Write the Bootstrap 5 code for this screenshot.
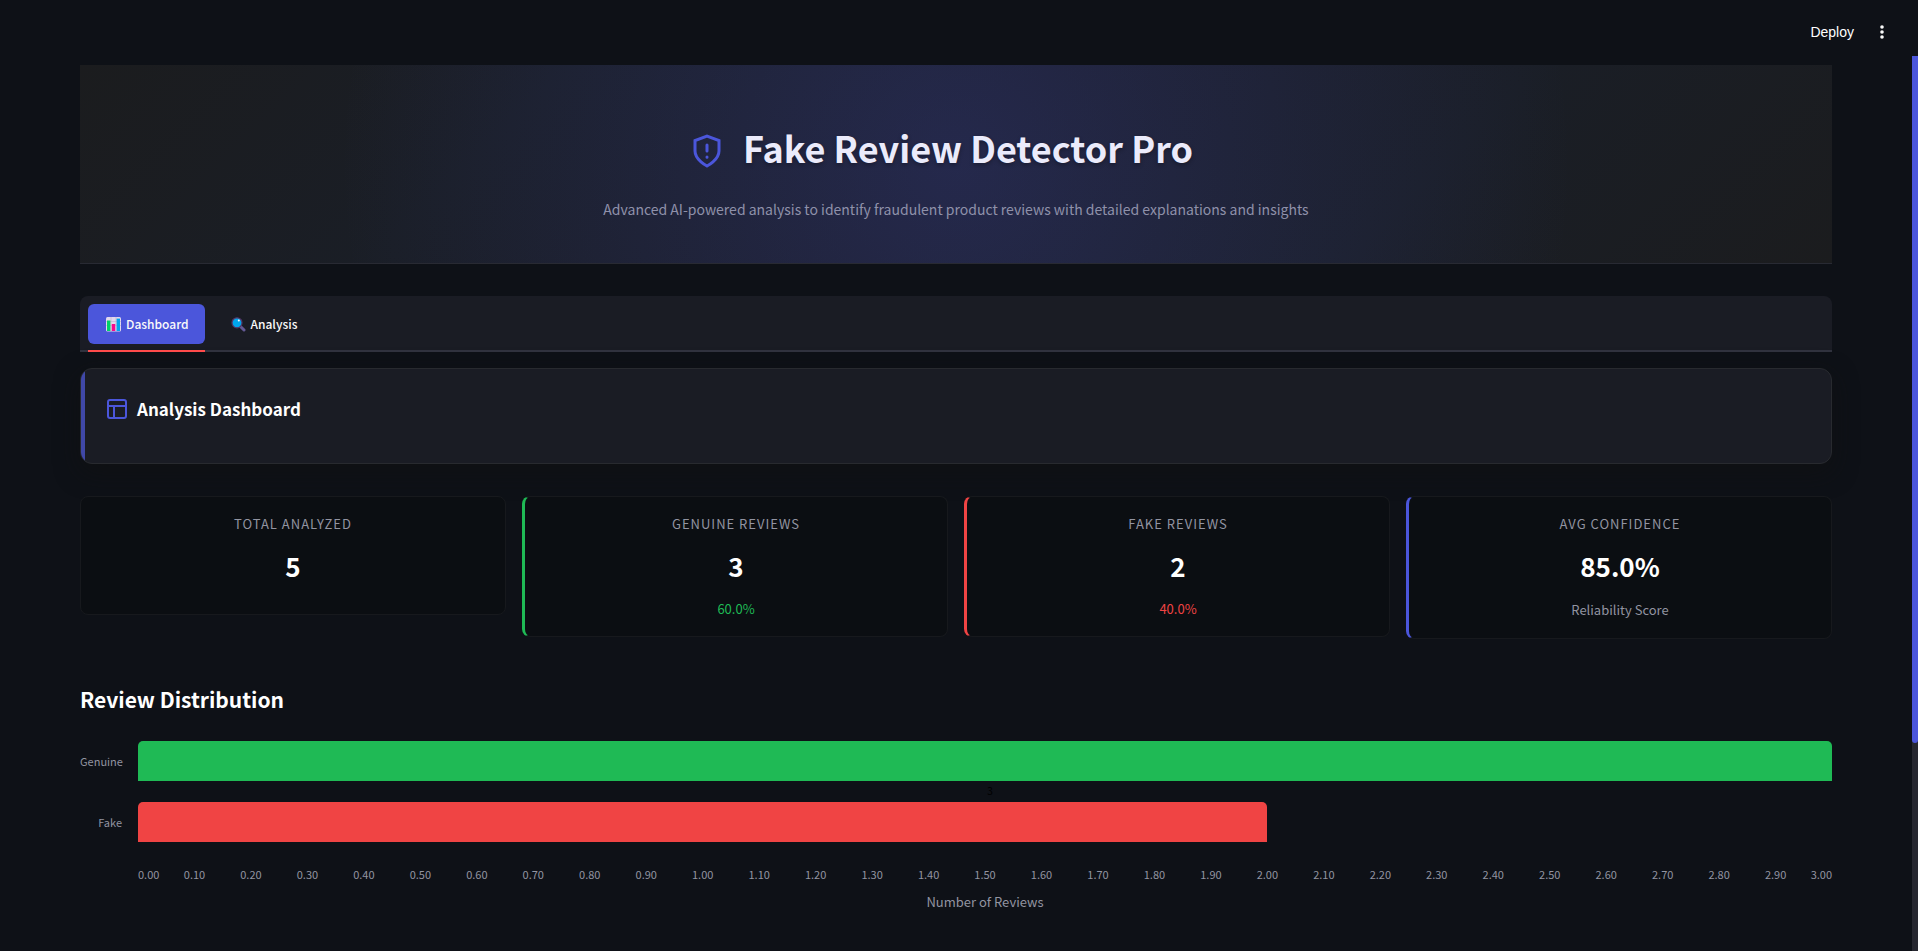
<!DOCTYPE html>
<html lang="en" data-bs-theme="dark">
<head>
<meta charset="utf-8">
<meta name="viewport" content="width=device-width, initial-scale=1">
<title>Fake Review Detector Pro</title>
<link rel="stylesheet" href="https://cdn.jsdelivr.net/npm/bootstrap@5.3.0/dist/css/bootstrap.min.css">
<style>
  :root { --page: #0e1117; --panel: #1a1c24; --accent: #4b56db; --good: #1fba55; --bad: #f04444; --muted: #9294a1; }
  body { background: var(--page); color: #fafafa; font-family: "Noto Sans CJK SC", "Noto Sans", sans-serif; font-size: 14px; line-height: 20px; }
  .topbar { height: 56px; padding: 0 24px; }
  .topbar button { font-family: "Liberation Sans", Arial, sans-serif; font-size: 14px; color: #fff; background: none; border: 0; }
  .topbar .deploy { padding: 0 20px 0 0; }
  .content-area { padding: 9px 80px 24px; min-width: 0; }
  .scroll-track { width: 6px; background: #262730; }
  .scroll-thumb { background: var(--accent); border-radius: 0 0 3px 3px; }
  .hero { height: 199px; padding-top: 58px; margin-bottom: 32px; border-bottom: 1px solid #282a33;
    background: radial-gradient(circle at center, rgba(75,86,219,.22), rgba(75,86,219,0) 70%), linear-gradient(135deg, #1b1c1e 0%, #1a1e26 25%, #1a1c24 50%, #1a1e26 75%, #1b1c1e 100%); }
  .hero h1 { font-size: 36px; line-height: 48px; font-weight: 700; color: #ebebfb; text-shadow: 0 2px 4px rgba(0,0,0,.3); padding-right: 30px; margin-bottom: 26px; }
  .hero h1 svg { margin: 8px 18px 0 0; }
  .hero p { font-size: 14px; line-height: 24px; color: #8f91aa; }
  .tab-strip { background: var(--panel); border-bottom: 2px solid #31333f; border-radius: 8px 8px 0 0; padding: 8px 8px 0; height: 56px; gap: 8px; }
  .tab-strip button { display: flex; align-items: flex-start; height: 48px; padding: 0; border: 0; background: none; color: #fafafa; font-size: 12px; font-weight: 500; border-bottom: 2px solid transparent; }
  .tab-strip button span { height: 40px; padding: 0 16px 0 18px; border-radius: 6px; gap: 5px; }
  .tab-strip button.active { border-color: #ff4b4b; }
  .tab-strip button.active span { background: var(--accent); }
  .panel-head { height: 96px; margin-bottom: 32px; background: var(--panel); border: 1px solid #282a2f; border-radius: 12px; overflow: hidden; box-shadow: 0 8px 24px rgba(16,16,16,.6); }
  .panel-head::before { content: ""; width: 4px; background: #4048a8; margin-right: 22px; }
  .panel-head h2 { font-size: 17px; line-height: 24px; font-weight: 700; }
  .panel-title { gap: 10px; }
  .metric { background: #0b0e12; border: 1px solid #17191d; border-radius: 8px; text-align: center; padding: 17px 16px 16px; }
  .metric.edge { border-left: 3px solid var(--edge); }
  .metric h3 { font-size: 13px; line-height: 20px; font-weight: 400; letter-spacing: 1px; color: var(--muted); margin-bottom: 14px; }
  .metric strong { display: block; font-size: 26px; line-height: 36px; font-weight: 700; color: #fff; margin-bottom: 14px; }
  .metric small { display: block; font-size: 13px; line-height: 22px; }
  .metric small.caption { color: var(--muted); line-height: 24px; }
  .section-title { font-size: 21px; line-height: 32px; font-weight: 700; margin: 44px 0 26px; }
  .chart { display: grid; grid-template-columns: 42px 1fr; column-gap: 16px; font-size: 11px; color: var(--muted); }
  .chart .cat { text-align: right; line-height: 40px; }
  .bar { height: 40px; border-radius: 5px 5px 0 0; }
  .between { height: 21px; line-height: 20px; color: #000; font-size: 10px; padding-left: 10px; }
  .ticks { margin-top: 22px; }
  .ticks span { flex: 1 1 0; min-width: 0; text-align: center; }
  .ticks span:first-child { flex-grow: .5; text-align: left; }
  .ticks span:last-child { flex-grow: .5; display: flex; justify-content: flex-end; }
  .axis-name { font-size: 13px; }
</style>
</head>
<body>
<div class="d-flex flex-column vh-100 overflow-hidden">
  <header class="topbar d-flex justify-content-end align-items-center flex-shrink-0 pt-2">
    <button type="button" class="deploy">Deploy</button>
    <button type="button" aria-label="Menu" class="d-flex p-0 me-1">
      <svg width="16" height="16" viewBox="0 0 16 16" fill="#fafafa"><circle cx="8" cy="3" r="1.8"/><circle cx="8" cy="8" r="1.8"/><circle cx="8" cy="13" r="1.8"/></svg>
    </button>
  </header>
  <div class="d-flex flex-grow-1 overflow-hidden">
    <main class="content-area flex-grow-1">
      <section class="hero text-center">
        <h1 class="d-flex justify-content-center align-items-center">
          <svg width="36" height="36" viewBox="0 0 24 24" fill="none" stroke="#4b56db" stroke-width="2"><path d="M12 22s8-4 8-10V5l-8-3-8 3v7c0 6 8 10 8 10z"/><path d="M12 8v4M12 16v.1" stroke-linecap="round"/></svg>
          <span>Fake Review Detector Pro</span>
        </h1>
        <p class="m-0">Advanced AI-powered analysis to identify fraudulent product reviews with detailed explanations and insights</p>
      </section>

      <nav class="tab-strip d-flex mb-3" role="tablist">
        <button type="button" role="tab" class="active"><span class="d-flex align-items-center">
          <svg width="15" height="15" viewBox="0 0 15 15"><rect width="15" height="14.5" rx="1.5" fill="#e1d8ec"/><path d="M0 4.5h15M0 8.5h15M5 0v14M10 0v14" stroke="#bdb0d0" stroke-width=".6"/><rect x="1" y="3.5" width="3.4" height="10.5" fill="#00d26a"/><rect x="5.8" y="7" width="3.4" height="7" fill="#f70a8d"/><rect x="10.6" y="1.6" width="3.4" height="12.4" fill="#00a6ed"/></svg>Dashboard</span></button>
        <button type="button" role="tab"><span class="d-flex align-items-center">
          <svg width="15" height="15" viewBox="0 0 15 15"><path d="M9.5 9.5l3.5 3.5" stroke="#635994" stroke-width="3" stroke-linecap="round"/><circle cx="6" cy="5.8" r="5" fill="#00a6ed" stroke="#533566" stroke-width="1.2"/><circle cx="7.8" cy="3.6" r="1" fill="#fff"/></svg>Analysis</span></button>
      </nav>

      <section class="panel-head d-flex">
        <div class="panel-title d-flex pt-4">
          <svg class="mt-1" width="20" height="24" viewBox="0 0 20 24" fill="none" stroke="#4b56db" stroke-width="2"><rect x="1" y="3" width="18" height="18" rx="2"/><path d="M1 9h18M7 9v12"/></svg>
          <h2 class="m-0 mt-1">Analysis Dashboard</h2>
        </div>
      </section>

      <section class="row g-3 align-items-start">
        <div class="col-3"><div class="metric"><h3>TOTAL ANALYZED</h3><strong>5</strong></div></div>
        <div class="col-3"><div class="metric edge" style="--edge: var(--good)"><h3>GENUINE REVIEWS</h3><strong>3</strong><small style="color: var(--good)">60.0%</small></div></div>
        <div class="col-3"><div class="metric edge" style="--edge: var(--bad)"><h3>FAKE REVIEWS</h3><strong>2</strong><small style="color: var(--bad)">40.0%</small></div></div>
        <div class="col-3"><div class="metric edge" style="--edge: var(--accent)"><h3>AVG CONFIDENCE</h3><strong>85.0%</strong><small class="caption">Reliability Score</small></div></div>
      </section>

      <h2 class="section-title">Review Distribution</h2>
      <section class="chart" aria-label="Review distribution">
        <div class="cat">Genuine</div><div class="bar" style="width:100%;background:var(--good)"></div>
        <div></div><div class="between text-center">3</div>
        <div class="cat">Fake</div><div class="bar" style="width:66.67%;background:var(--bad)"></div>
        <div></div>
        <div>
          <div class="ticks d-flex"><span>0.00</span><span>0.10</span><span>0.20</span><span>0.30</span><span>0.40</span><span>0.50</span><span>0.60</span><span>0.70</span><span>0.80</span><span>0.90</span><span>1.00</span><span>1.10</span><span>1.20</span><span>1.30</span><span>1.40</span><span>1.50</span><span>1.60</span><span>1.70</span><span>1.80</span><span>1.90</span><span>2.00</span><span>2.10</span><span>2.20</span><span>2.30</span><span>2.40</span><span>2.50</span><span>2.60</span><span>2.70</span><span>2.80</span><span>2.90</span><span>3.00</span></div>
          <div class="axis-name text-center mt-2">Number of Reviews</div>
        </div>
      </section>
    </main>
    <div class="scroll-track flex-shrink-0"><div class="scroll-thumb" style="height:76.8%"></div></div>
  </div>
</div>
<script src="https://cdn.jsdelivr.net/npm/bootstrap@5.3.0/dist/js/bootstrap.bundle.min.js"></script>
</body>
</html>
